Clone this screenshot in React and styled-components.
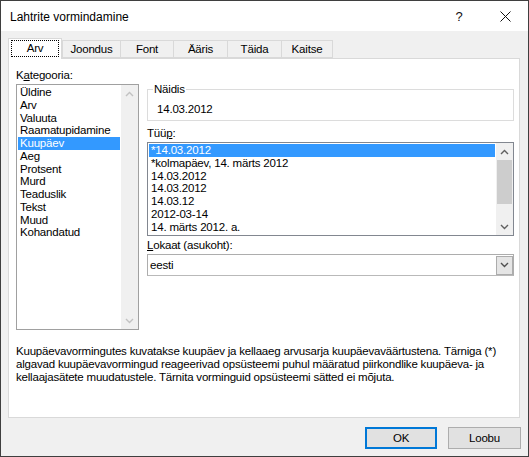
import styled, { createGlobalStyle } from "styled-components";

const GlobalStyle = createGlobalStyle`
  html, body {
    margin: 0;
    padding: 0;
    background: #ffffff;
  }
  * {
    box-sizing: border-box;
  }
`;

const Window = styled.div`
  width: 529px;
  height: 457px;
  border: 1px solid #3f3f3f;
  background: #f0f0f0;
  display: flex;
  flex-direction: column;
  font-family: "Liberation Sans", Arial, sans-serif;
  font-size: 11.5px;
  letter-spacing: -0.2px;
  color: #000;
`;

const TitleBar = styled.div`
  height: 30px;
  background: #ffffff;
  display: flex;
  align-items: center;
  padding-left: 9px;
`;

const Title = styled.div`
  flex: 1;
  font-size: 12px;
  letter-spacing: 0;
  margin-top: 1px;
`;

const TitleButton = styled.div`
  width: 46px;
  height: 30px;
  display: flex;
  align-items: center;
  justify-content: center;
  font-size: 13px;
  color: #111;
`;

const TabStrip = styled.div`
  height: 27px;
  display: flex;
  align-items: flex-end;
  padding-left: 7px;
`;

const Tab = styled.div`
  width: ${(p) => p.$w}px;
  height: ${(p) => (p.$active ? 21 : 18)}px;
  margin-left: ${(p) => (p.$first ? 0 : -1)}px;
  margin-bottom: ${(p) => (p.$active ? -1 : 0)}px;
  border: 1px solid #d9d9d9;
  border-bottom: ${(p) => (p.$active ? "none" : "1px solid #d9d9d9")};
  background: ${(p) => (p.$active ? "#ffffff" : "#f0f0f0")};
  position: relative;
  z-index: ${(p) => (p.$active ? 2 : 1)};
  display: flex;
  align-items: center;
  justify-content: center;
  padding-bottom: ${(p) => (p.$active ? 2 : 0)}px;
`;

const FocusRect = styled.span`
  width: 48px;
  height: 17px;
  border: 1px dotted #000;
  display: flex;
  align-items: center;
  justify-content: center;
`;

const Panel = styled.div`
  margin-left: 7px;
  width: 512px;
  height: 360px;
  background: #ffffff;
  border: 1px solid #d9d9d9;
  padding: 10px 5px 0 7px;
`;

const Columns = styled.div`
  display: grid;
  grid-template-columns: 123px 1fr;
  column-gap: 8px;
`;

const Column = styled.div`
  display: flex;
  flex-direction: column;
  padding-top: ${(p) => p.$top || 0}px;
`;

const Label = styled.div`
  line-height: 13px;
  height: 13px;
  margin-top: ${(p) => p.$mt || 0}px;
  white-space: nowrap;
`;

const ListBox = styled.div`
  margin-top: 2px;
  height: ${(p) => p.$h}px;
  border: 1px solid ${(p) => p.$border};
  background: #ffffff;
  display: flex;
`;

const Items = styled.div`
  flex: 1;
  padding: 1px 1px 0 1px;
  overflow: hidden;
`;

const Item = styled.div`
  height: ${(p) => p.$lh}px;
  line-height: ${(p) => p.$lh}px;
  padding-left: 2px;
  white-space: nowrap;
  background: ${(p) => (p.$selected ? "#3399ff" : "transparent")};
  color: ${(p) => (p.$selected ? "#ffffff" : "#000000")};
`;

const ScrollBar = styled.div`
  width: 17px;
  background: #f0f0f0;
  display: flex;
  flex-direction: column;
  align-items: center;
`;

const ScrollArrow = styled.div`
  height: 17px;
  width: 17px;
  display: flex;
  align-items: center;
  justify-content: center;
  flex: none;
`;

const Track = styled.div`
  flex: 1;
  width: 100%;
  padding: 0 1px;
`;

const Thumb = styled.div`
  height: 44px;
  background: #cdcdcd;
`;

const Group = styled.fieldset`
  margin: 0;
  height: 38px;
  border: 1px solid #dcdcdc;
  padding: 0 0 0 5px;
  min-width: 0;
`;

const Legend = styled.legend`
  padding: 0 1px;
  line-height: 13px;
`;

const Sample = styled.div`
  line-height: 13px;
  padding: 7px 0 0 4px;
`;

const Combo = styled.div`
  margin-top: 2px;
  height: 22px;
  border: 1px solid #adadad;
  border-bottom-color: #b9b9b9;
  background: #ffffff;
  display: flex;
  align-items: center;
  padding: 0 0 0 2px;
`;

const ComboText = styled.div`
  flex: 1;
`;

const ComboButton = styled.div`
  width: 17px;
  height: 19px;
  background: #e5e5e5;
  border: 1px solid #acacac;
  display: flex;
  align-items: center;
  justify-content: center;
`;

const Description = styled.div`
  margin-top: 15px;
  line-height: 13px;
  white-space: nowrap;
`;

const ButtonRow = styled.div`
  display: flex;
  justify-content: flex-end;
  gap: 11px;
  padding: 9px 7px 0 0;
`;

const Button = styled.div`
  width: ${(p) => p.$w}px;
  height: 22px;
  background: #e1e1e1;
  border: ${(p) => (p.$focus ? "2px solid #0078d7" : "1px solid #adadad")};
  display: flex;
  align-items: center;
  justify-content: center;
`;

const Chevron = ({ up, color }) => (
  <svg width="9" height="6" viewBox="0 0 9 6">
    <polyline
      points={up ? "1,5 4.5,1.5 8,5" : "1,1 4.5,4.5 8,1"}
      fill="none"
      stroke={color}
      strokeWidth="1.4"
    />
  </svg>
);

const categories = [
  "Üldine",
  "Arv",
  "Valuuta",
  "Raamatupidamine",
  "Kuupäev",
  "Aeg",
  "Protsent",
  "Murd",
  "Teaduslik",
  "Tekst",
  "Muud",
  "Kohandatud",
];

const types = [
  "*14.03.2012",
  "*kolmapäev, 14. märts 2012",
  "14.03.2012",
  "14.03.2012",
  "14.03.12",
  "2012-03-14",
  "14. märts 2012. a.",
];

const tabs = [
  { name: "Joondus", w: 59 },
  { name: "Font", w: 54 },
  { name: "Ääris", w: 55 },
  { name: "Täida", w: 55 },
  { name: "Kaitse", w: 52 },
];

export default function App() {
  return (
    <>
      <GlobalStyle />
      <Window>
        <TitleBar>
          <Title>Lahtrite vormindamine</Title>
          <TitleButton>?</TitleButton>
          <TitleButton>
            <svg width="11" height="11" viewBox="0 0 11 11">
              <path d="M0.5 0.5 L10.5 10.5 M10.5 0.5 L0.5 10.5" stroke="#111" strokeWidth="1" />
            </svg>
          </TitleButton>
        </TitleBar>

        <TabStrip>
          <Tab $w={54} $active $first>
            <FocusRect>Arv</FocusRect>
          </Tab>
          {tabs.map((t, i) => (
            <Tab key={t.name} $w={t.w} $first={i === 0}>
              {t.name}
            </Tab>
          ))}
        </TabStrip>

        <Panel>
          <Columns>
            <Column>
              <Label>
                K<u>a</u>tegooria:
              </Label>
              <ListBox $h={246} $border="#a0a0a0">
                <Items>
                  {categories.map((c) => (
                    <Item key={c} $lh={12.75} $selected={c === "Kuupäev"}>
                      {c}
                    </Item>
                  ))}
                </Items>
                <ScrollBar>
                  <ScrollArrow>
                    <Chevron up color="#c2c2c2" />
                  </ScrollArrow>
                  <Track />
                  <ScrollArrow>
                    <Chevron color="#c2c2c2" />
                  </ScrollArrow>
                </ScrollBar>
              </ListBox>
            </Column>

            <Column $top={14}>
              <Group>
                <Legend>Näidis</Legend>
                <Sample>14.03.2012</Sample>
              </Group>

              <Label $mt={6}>
                Tüü<u>p</u>:
              </Label>
              <ListBox $h={94} $border="#828790">
                <Items>
                  {types.map((t, i) => (
                    <Item key={i} $lh={12.8} $selected={i === 0}>
                      {t}
                    </Item>
                  ))}
                </Items>
                <ScrollBar>
                  <ScrollArrow>
                    <Chevron up color="#606060" />
                  </ScrollArrow>
                  <Track>
                    <Thumb />
                  </Track>
                  <ScrollArrow>
                    <Chevron color="#606060" />
                  </ScrollArrow>
                </ScrollBar>
              </ListBox>

              <Label $mt={3}>
                <u>L</u>okaat (asukoht):
              </Label>
              <Combo>
                <ComboText>eesti</ComboText>
                <ComboButton>
                  <Chevron color="#505050" />
                </ComboButton>
              </Combo>
            </Column>
          </Columns>

          <Description>
            Kuupäevavormingutes kuvatakse kuupäev ja kellaaeg arvusarja kuupäevaväärtustena. Tärniga (*)
            <br />
            algavad kuupäevavormingud reageerivad opsüsteemi puhul määratud piirkondlike kuupäeva- ja
            <br />
            kellaajasätete muudatustele. Tärnita vorminguid opsüsteemi sätted ei mõjuta.
          </Description>
        </Panel>

        <ButtonRow>
          <Button $w={72} $focus>
            OK
          </Button>
          <Button $w={73}>Loobu</Button>
        </ButtonRow>
      </Window>
    </>
  );
}
